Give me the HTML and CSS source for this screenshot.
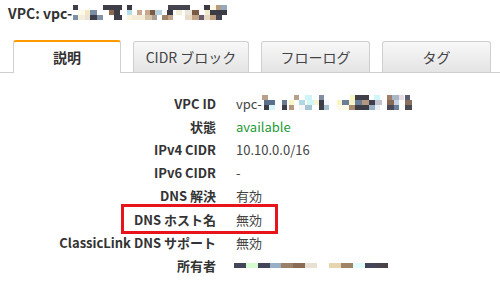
FILE: index.html
```html
<!DOCTYPE html>
<html lang="ja">
<head>
    <meta charset="UTF-8">
    <title>VPC 詳細</title>
    <link rel="stylesheet" href="styles.css">
</head>
<body>

    <!-- Header -->
    <h1 class="title">VPC: vpc-<span class="mosaic mosaic-title"></span></h1>

    <!-- Tabs -->
    <div class="tabs">
        <div class="tab tab-active">説明</div>
        <div class="tab tab-cidr">CIDR ブロック</div>
        <div class="tab tab-flow">フローログ</div>
        <div class="tab tab-tag">タグ</div>
    </div>

    <!-- Description -->
    <div class="details">
        <div class="label">VPC ID</div>
        <div class="value">vpc-<span class="mosaic mosaic-id"></span></div>

        <div class="label">状態</div>
        <div class="value status">available</div>

        <div class="label">IPv4 CIDR</div>
        <div class="value">10.10.0.0/16</div>

        <div class="label">IPv6 CIDR</div>
        <div class="value">-</div>

        <div class="label">DNS 解決</div>
        <div class="value">有効</div>

        <div class="label">DNS ホスト名</div>
        <div class="value">無効</div>

        <div class="label">ClassicLink DNS サポート</div>
        <div class="value">無効</div>

        <div class="label">所有者</div>
        <div class="value"><span class="mosaic mosaic-owner"></span></div>

        <div class="highlight"></div>
    </div>

</body>
</html>
```

FILE: styles.css
```css
body {
    font-family: "Noto Sans CJK JP", "Noto Sans", sans-serif;
    background-color: #fff;
    color: #444;
    margin: 0;
    padding: 0;
    width: 500px;
    height: 287px;
    overflow: hidden;
}

.title {
    font-size: 14px;
    font-weight: bold;
    color: #333;
    margin: 0;
    padding: 3px 8px 0;
    height: 37px;
    line-height: 20px;
    display: flex;
    align-items: flex-start;
}

.mosaic {
    display: inline-block;
    background-repeat: no-repeat;
}

.mosaic-title {
    width: 156px;
    height: 15px;
    margin-top: 2px;
    background-size: 156px 5px;
    background-position: 0 0, 0 5px, 0 10px;
    background-image:
        linear-gradient(to right, #fff 0 1px, #3f3f4a 1px 6px, #fff 6px 31px, #3e3e48 31px 50px, #fff 50px 55px, #3a3a42 55px 60px, #fff 60px 96px, #44444e 96px 118px, #fff 118px 132px, #3b3b45 132px 138px, #fdf8e4 138px 144px, #b59c82 144px 149px, #96a8bb 149px 155px, #fff 155px),
        linear-gradient(to right, #fff 0 6px, #fdf8e8 6px 13px, #f1e7c4 13px 18px, #7a8da4 18px 25px, #fff 25px 37px, #8c6a50 37px 42px, #3e3e48 42px 48px, #fff 48px 55px, #b5dde8 55px 60px, #fff 60px 65px, #c8a98d 65px 70px, #fff 70px 73px, #c6a88c 73px 78px, #7c5a45 78px 83px, #b6d2df 83px 90px, #fff 90px 95px, #3b3b45 95px 101px, #fff 101px 104px, #f4efd9 104px 110px, #fff 110px 113px, #ece6da 113px 120px, #7a5a46 120px 127px, #fff 127px 133px, #f0e8c8 133px 138px, #3c3c46 138px 155px, #fff 155px),
        linear-gradient(to right, #fff 0 1px, #7d8fa5 1px 6px, #f5eedd 6px 13px, #eae2d6 13px 18px, #3f3f4a 18px 25px, #8093a8 25px 31px, #fff 31px 42px, #3e3e48 42px 50px, #fff 50px 55px, #faf4dc 55px 60px, #f4ecd9 60px 73px, #d6c4a8 73px 80px, #aaa098 80px 85px, #fff 85px 90px, #a28366 90px 96px, #c2a78e 96px 101px, #fff 101px 113px, #e8dcc8 113px 120px, #c2a588 120px 127px, #6a5c70 127px 132px, #e6d9c2 132px 138px, #c2a284 138px 144px, #444452 144px 150px, #fff 150px);
}

.tabs {
    display: flex;
    gap: 12px;
    padding-left: 13px;
    height: 32px;
    border-bottom: 1px solid #cfcfcf;
}

.tab {
    box-sizing: border-box;
    height: 31px;
    margin-top: 1px;
    margin-bottom: -1px;
    border: 1px solid #cfcfcf;
    border-bottom: none;
    border-radius: 3px 3px 0 0;
    background: linear-gradient(#f8f8f8, #e4e4e4);
    font-size: 14px;
    line-height: 30px;
    text-align: center;
    color: #444;
}

.tab-active {
    width: 108px;
    height: 33px;
    margin-top: 0;
    border-top: 2px solid #f90;
    background: #fff;
    font-weight: bold;
    line-height: 31px;
    color: #333;
}

.tab-cidr {
    width: 116px;
}

.tab-flow,
.tab-tag {
    width: 109px;
}

.details {
    position: relative;
    display: grid;
    grid-template-columns: 216px 1fr;
    column-gap: 20px;
    grid-auto-rows: 23.1px;
    align-items: center;
    padding-top: 19px;
    font-size: 13px;
}

.label {
    text-align: right;
    font-weight: bold;
    color: #333;
    white-space: nowrap;
}

.value {
    display: flex;
    align-items: center;
    color: #444;
}

.status {
    color: #1d9a35;
}

.mosaic-id {
    width: 150px;
    height: 15px;
    margin-top: -2px;
    background-size: 150px 5px;
    background-position: 0 0, 0 5px, 0 10px;
    background-image:
        linear-gradient(to right, #b9a088 0 6px, #fff 6px 32px, #b9a08a 32px 37px, #fff 37px 43px, #cff4f8 43px 50px, #fff 50px 57px, #7f8ea3 57px 62px, #fff 62px 88px, #f9f6c4 88px 93px, #404048 93px 107px, #fff 107px 112px, #cff6f8 112px 118px, #fff 118px 125px, #a0806a 125px 130px, #a8b8c8 130px 137px, #e8dde2 137px 142px, #fff 142px 143px, #5a6070 143px 148px, #fff 148px),
        linear-gradient(to right, #fff 0 2px, #5a708a 2px 13px, #fff 13px 20px, #6a7a90 20px 25px, #fff 25px 27px, #f8f6c6 27px 32px, #fff 32px 37px, #b0d8e4 37px 43px, #fff 43px 45px, #d0f6f8 45px 52px, #f6f2d2 52px 57px, #3c3c46 57px 62px, #f5f5ff 62px 67px, #fff 67px 75px, #f8f4c6 75px 80px, #6a7e98 80px 87px, #f6f4c8 87px 93px, #6a7e98 93px 100px, #b49880 100px 107px, #3e3e4a 107px 113px, #c4c4d0 113px 120px, #fff 120px 125px, #8a6a55 125px 132px, #c4d4e4 132px 137px, #fff 137px 143px, #8a7060 143px 150px),
        linear-gradient(to right, #fff 0 2px, #3e3e46 2px 7px, #d8f6f8 7px 13px, #fff 13px 20px, #3e3e46 20px 25px, #fff 25px 27px, #b49884 27px 32px, #fff 32px 37px, #f6f6f6 37px 43px, #a8c4d4 43px 50px, #fff 50px 57px, #3e3e48 57px 62px, #a8c0d0 62px 67px, #fff 67px 75px, #fdfbe8 75px 87px, #a88a70 87px 93px, #3e3e46 93px 107px, #9cb0c4 107px 113px, #e8eef4 113px 118px, #fff 118px 125px, #4a4a56 125px 132px, #6a7e98 132px 137px, #fff 137px 143px, #4a4a52 143px 150px);
}

.mosaic-owner {
    width: 154px;
    height: 5px;
    margin-left: -2px;
    background-image: linear-gradient(to right, #45455a 0 12px, #d4fcd0 12px 24px, #45455a 24px 36px, #98afc4 36px 47px, #9a8068 47px 59px, #8a6c56 59px 71px, #e8e0d0 71px 83px, #fff 83px 95px, #e6d6b0 95px 107px, #a08468 107px 119px, #e0fcfc 119px 131px, #45455a 131px 143px, #4a4448 143px 154px);
}

.highlight {
    position: absolute;
    left: 121px;
    top: 131px;
    width: 151px;
    height: 24px;
    border: 3px solid #e8141c;
}
```
